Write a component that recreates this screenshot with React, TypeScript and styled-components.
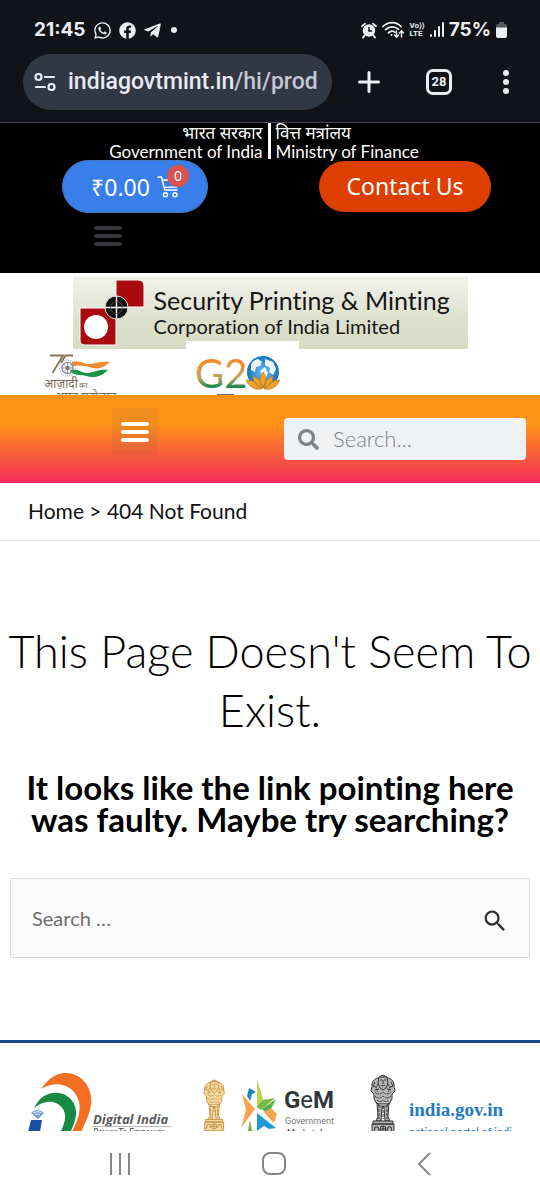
import React from "react";
import styled, { createGlobalStyle } from "styled-components";
import { FaFacebook, FaSearch, FaTelegramPlane, FaWhatsapp } from "react-icons/fa";
import { MdSearch } from "react-icons/md";

const sans = `Lato, "Noto Sans Devanagari", "Noto Sans", sans-serif`;

const GlobalStyle = createGlobalStyle`
  *, *::before, *::after { box-sizing: border-box; }
  body { margin: 0; background: #fff; color: #000; font-family: ${sans}; font-variant-ligatures: no-common-ligatures; }
  button { border: 0; padding: 0; background: none; font: inherit; color: inherit; cursor: pointer; }
  a { color: inherit; text-decoration: none; }
  svg { display: block; flex: none; }
  h1, h2, p { margin: 0; }
`;

/* ---------- phone chrome ---------- */

const Chrome = styled.div`
  background: #111318;
  color: #eceef2;
  border-bottom: 1px solid #45434b;
`;

const StatusBar = styled.div`
  display: flex;
  justify-content: space-between;
  align-items: center;
  height: 54px;
  padding: 6px 33px 0 34px;
  font: 700 19px/24px Inter, sans-serif;
`;

const StatusGroup = styled.div<{ $gap: number }>`
  display: flex;
  align-items: center;
  gap: ${(p) => p.$gap}px;
`;

const Volte = styled.span`
  display: grid;
  font: 700 8px/8px Roboto, sans-serif;
`;

const Toolbar = styled.div`
  display: flex;
  align-items: center;
  height: 68px;
  padding: 0 0 12px 23px;
`;

const AddressPill = styled.button`
  display: flex;
  flex: 1;
  align-items: center;
  gap: 12px;
  min-width: 0;
  height: 56px;
  padding: 0 11px;
  border-radius: 28px;
  background: #323744;
  color: #e7eaf4;
  font: 500 23px/32px Roboto, sans-serif;
  white-space: nowrap;
`;

const UrlPath = styled.span`
  color: #c3c7d3;
`;

const ToolButton = styled.button<{ $width: number }>`
  display: grid;
  place-items: center;
  width: ${(p) => p.$width}px;
  height: 48px;
`;

const TabCount = styled.span`
  display: grid;
  place-items: center;
  width: 26px;
  height: 26px;
  border: 3px solid currentColor;
  border-radius: 7px;
  font: 700 13px/16px Roboto, sans-serif;
`;

const SystemNav = styled.nav`
  display: flex;
  justify-content: space-around;
  align-items: center;
  height: 68px;
  padding: 0 44px 2px;
  background: #fff;
  color: #858585;
`;

/* ---------- site header ---------- */

const TopBar = styled.header`
  height: 150px;
  background: #000;
  color: #fff;
`;

const Ministry = styled.div`
  display: grid;
  grid-template-columns: minmax(0, 1fr) 3px minmax(0, 1fr);
  gap: 5px;
  height: 37px;
  padding-right: 2px;
  font-size: 17px;
  line-height: 19px;
  white-space: nowrap;
`;

const MinistryName = styled.p<{ $align: "left" | "right" }>`
  text-align: ${(p) => p.$align};
`;

const Hindi = styled.span`
  display: block;
`;

const Rule = styled.span`
  height: 36px;
  background: #fff;
`;

const Actions = styled.div`
  display: grid;
  grid-template-columns: minmax(0, 1fr) minmax(0, 1fr);
  justify-items: center;
  align-items: center;
  font-family: "Noto Sans", sans-serif;
  font-size: 23px;
`;

const CartButton = styled.button`
  display: flex;
  align-items: center;
  justify-content: center;
  gap: 7px;
  width: 146px;
  height: 53px;
  border: 1px solid #4b78b8;
  border-radius: 27px;
  background: #387fec;
`;

const CartIcon = styled.span`
  position: relative;
`;

const Badge = styled.span`
  position: absolute;
  top: -11px;
  right: -10px;
  width: 22px;
  height: 22px;
  border-radius: 50%;
  background: #d9534f;
  font-size: 14px;
  line-height: 22px;
  text-align: center;
`;

const ContactLink = styled.a`
  width: 172px;
  border-radius: 26px;
  background: #dd3f00;
  line-height: 51px;
  text-align: center;
`;

const TopMenu = styled.div`
  display: grid;
  justify-items: center;
  width: 40%;
  padding-top: 13px;
  color: #33363b;
`;

const BrandArea = styled.section`
  height: 122px;
  padding-top: 3px;
  overflow: hidden;
`;

const Banner = styled.a`
  display: flex;
  align-items: center;
  gap: 10px;
  width: 395px;
  max-width: 100%;
  height: 73px;
  margin: 0 auto;
  padding-left: 6px;
  background: linear-gradient(#f2f2ec, #dde0cd 60%, #d7dac3);
  color: #161616;
  white-space: nowrap;
`;

const BannerText = styled.span`
  display: grid;
  padding-bottom: 2px;
  font-size: 25px;
  line-height: 28px;
`;

const BannerSub = styled.span`
  font-size: 20px;
  line-height: 24px;
`;

const Partners = styled.div`
  display: flex;
  gap: 61px;
  padding-left: 43px;
`;

const G20Card = styled.div`
  width: 113px;
  margin-top: -8px;
  padding-left: 8px;
  background: #fff;
`;

const NavBand = styled.nav`
  display: grid;
  grid-template-columns: minmax(0, 1fr) minmax(0, 1fr);
  height: 88px;
  padding-top: 13px;
  background: linear-gradient(#ff9318 33%, #f22c5c);
`;

const MenuButton = styled.button`
  display: grid;
  place-items: center;
  justify-self: center;
  width: 46px;
  height: 47px;
  border-radius: 4px;
  background: rgba(80, 80, 80, 0.08);
  color: #fff;
`;

const NavSearch = styled.label`
  display: flex;
  align-items: center;
  gap: 14px;
  height: 42px;
  margin: 10px 14px 0;
  padding: 0 14px;
  border-radius: 4px;
  background: #eff1f3;
  color: #7e8287;
`;

const SearchInput = styled.input`
  flex: 1;
  min-width: 0;
  border: 0;
  padding: 0;
  background: none;
  outline: 0;
  color: inherit;
  font: 400 20px/28px ${sans};
  &::placeholder { color: inherit; opacity: 1; }
`;

const LightInput = styled(SearchInput)`
  font-size: 22px;
  font-weight: 300;
`;

/* ---------- content ---------- */

const Breadcrumb = styled.nav`
  height: 58px;
  padding-left: 28px;
  border-bottom: 1px solid #e4e4e4;
  color: #111;
  font-size: 21px;
  line-height: 56px;
`;

const Main = styled.main`
  padding: 81px 0 82px;
  text-align: center;
`;

const Title = styled.h1`
  font-size: 45px;
  font-weight: 300;
  line-height: 59px;
`;

const Subtitle = styled.h2`
  max-width: 510px;
  margin: 31px auto 43px;
  font-size: 33px;
  font-weight: 700;
  line-height: 32px;
`;

const SearchForm = styled.form`
  display: flex;
  align-items: center;
  height: 80px;
  margin: 0 10px;
  padding: 0 20px 0 21px;
  border: 1px solid #dcdcdc;
  border-radius: 2px;
  background: #fafafa;
  color: #707070;
`;

const SubmitButton = styled.button`
  padding-top: 6px;
  color: #303030;
`;

const Footer = styled.footer`
  display: flex;
  justify-content: space-between;
  align-items: flex-end;
  height: 91px;
  padding: 0 28px;
  border-top: 3px solid #164a8c;
`;

/* ---------- drawings ---------- */

const Bars = () => (
  <svg width="28" height="20" viewBox="0 0 28 20" fill="currentColor" aria-hidden="true">
    <rect width="28" height="4" rx="2" />
    <rect y="8" width="28" height="4" rx="2" />
    <rect y="16" width="28" height="4" rx="2" />
  </svg>
);

const AlarmIcon = () => (
  <svg width="16" height="17" viewBox="0 0 16 17">
    <circle cx="8" cy="8.5" r="6.2" fill="#eceef2" />
    <path d="M1 4.2 4 1.6M15 4.2 12 1.6M3.6 13.4 2 15.6M12.4 13.4 14 15.6" stroke="#eceef2" strokeWidth="1.8" strokeLinecap="round" />
    <path d="M8 5v4h3" stroke="#111318" strokeWidth="1.5" fill="none" />
  </svg>
);

const WifiIcon = () => (
  <svg width="23" height="18" viewBox="0 0 23 18" fill="none" stroke="#eceef2" strokeWidth="1.8" strokeLinecap="round">
    <path d="M1 5.5C6 .2 14.5 .2 19 5.5M3.6 8.7c3.6-3.8 9.4-3.8 12.8-.4M6.5 11.8c2-2 5-2 6.500-.6" />
    <circle cx="9.5" cy="14" r="1" fill="#eceef2" stroke="none" />
    <path d="M14.5 10v6m-2-2 2 2.200 2-2.200M19.5 16v-6m-2 2 2-2.200 2 2.200" strokeWidth="1.4" />
  </svg>
);

const SignalIcon = () => (
  <svg width="14" height="16" viewBox="0 0 14 16" fill="#eceef2">
    <rect y="12" width="2" height="3" rx="1" />
    <rect x="4" y="8" width="2" height="7" rx="1" />
    <rect x="8" y="4" width="2" height="11" rx="1" />
    <rect x="12" width="2" height="15" rx="1" />
  </svg>
);

const BatteryIcon = () => (
  <svg width="11" height="16" viewBox="0 0 11 16">
    <path d="M3 0h5v2h1.500Q11 2 11 4v3H0V4Q0 2 1.500 2H3z" fill="#55575c" />
    <path d="M0 5.500h11V14q0 2-2 2H2q-2 0-2-2z" fill="#eceef2" />
  </svg>
);

const TuneIcon = () => (
  <svg width="22" height="18" viewBox="0 0 22 18" fill="none" stroke="currentColor" strokeWidth="2.2" strokeLinecap="round">
    <circle cx="4.5" cy="4" r="3" />
    <path d="M11 4h9M2 14h9" />
    <circle cx="17.5" cy="14" r="3" />
  </svg>
);

const CartDrawing = () => (
  <svg width="22" height="22" viewBox="0 0 22 22" fill="none" stroke="#fff" strokeWidth="1.4" strokeLinecap="round" strokeLinejoin="round">
    <path d="M1 1h3.500l3.200 13H20M5.200 4H21l-1.500 7-12.500.4" />
    <circle cx="8.5" cy="18.8" r="2" />
    <circle cx="18" cy="18.8" r="2" />
  </svg>
);

const CorporationMark = () => (
  <svg width="65" height="66" viewBox="0 0 65 66">
    <path d="M37 0h22q6 0 6 6v21H37z" fill="#a80a0d" stroke="#fff" />
    <path d="M1 28h36v37H6q-5 0-5-5z" fill="#a80a0d" stroke="#fff" />
    <circle cx="17" cy="47" r="12" fill="#fff" />
    <circle cx="37.5" cy="27.5" r="11.5" fill="#111" stroke="#dfe2d3" />
    <path d="M26 27.500h23M37.500 16v23" stroke="#fff" strokeWidth="1.4" />
    <circle cx="37.5" cy="27.5" r="6" fill="none" stroke="#555" strokeWidth=".8" />
  </svg>
);

const AzadiLogo = () => (
  <svg width="82" height="46" viewBox="0 0 82 46">
    <path d="M7 6.500h13L9.500 24M30 6.500h-7.500L18 14" fill="none" stroke="#83745a" strokeWidth="1.8" />
    <path d="M29 13c8-3 12 3 19 2s10-3 19-2q-4 4-10 6c-8 2-13-3-19-2-4 1-6 0-9-1z" fill="#f5872c" />
    <path d="M32 17c7-2 10 3 17 2l-4 3-11-1z" fill="#fff" />
    <path d="M27 21c8-2 12 4 19 3s9-4 19-3q-4 4-9 6c-8 3-13-1-19-1-4 0-7-1-10-4z" fill="#159447" />
    <g fill="none" stroke="#7e8799">
      <circle cx="24.5" cy="19" r="5.6" strokeWidth="1.2" />
      <path d="M24.500 13.500v11M19 19h11M20.500 15l8 8M28.500 15l-8 8" strokeWidth=".8" />
      <circle cx="24.5" cy="19" r="8" strokeWidth=".8" strokeDasharray="1 1" />
    </g>
    <circle cx="24.5" cy="19" r="2" fill="#7c6672" />
    <g fill="#756c5c" fontFamily={`"Noto Sans Devanagari", "Noto Sans", sans-serif`}>
      <text x="1" y="39" fontSize="12">आज़ादी</text>
      <text x="36" y="39" fontSize="8">का</text>
      <text x="12" y="52" fontSize="12">अमृत महोत्सव</text>
    </g>
  </svg>
);

const G20Logo = () => (
  <svg width="90" height="54" viewBox="0 0 90 54">
    <defs>
      <linearGradient id="tricolor" x1="0" y1="0" x2="0" y2="1">
        <stop offset=".25" stopColor="#f58a2b" />
        <stop offset=".6" stopColor="#c0a45a" />
        <stop offset=".8" stopColor="#158653" />
      </linearGradient>
      <radialGradient id="globe">
        <stop offset="0" stopColor="#6bc1ee" />
        <stop offset="1" stopColor="#1474bd" />
      </radialGradient>
    </defs>
    <text x="1" y="47" fontSize="40" fontFamily="Lato, sans-serif" fill="url(#tricolor)">G2</text>
    <circle cx="69" cy="31" r="16" fill="url(#globe)" />
    <path d="M57 24q2-5 7-6l4 3-2 4-4 1-1 5-4-2zM71 18l8 3 3 7-3 6-4-3 1-4-5-3zM66 30l5-4 3 6-3 7z" fill="#edf7fa" />
    <path d="M69 31q6 7 0 16-6-9 0-16zM59 35q8 3 10 12-10-2-10-12zM79 35q-8 3-10 12 10-2 10-12zM52 39q10 0 16 9-11 2-16-9zM86 39q-10 0-16 9 11 2 16-9z" fill="#eda22b" stroke="#ba7926" strokeWidth=".7" />
    <path d="M23 53.500h17" stroke="#756c5c" />
  </svg>
);

const Lions = ({ ink, paper }: { ink: string; paper: string }) => (
  <g fill={paper} stroke={ink} strokeWidth="1">
    <path d="M7 4Q1 7 2 13l-1 4 3 3v5l3 5h12l3-5v-5l3-3-1-4q1-6-5-9z" />
    <path d="M9 3l4-2 4 2 1 6-2 5-3 2-3-2-2-5z" />
    <path d="M10 3h6M10 6h2m2 0h2M13 6v4m-2 1q2 2 4 0M5 8l-2 4 3 1M21 8l2 4-3 1M5 16l4-1m12 1-4-1" fill="none" />
    <path d="M5 18q4 4 8 0 4 4 8 0M5 22q4 4 8 0 4 4 8 0M7 26q3 3 6 0 3 3 6 0M8 10l-2 4 2 4M18 10l2 4-2 4" fill="none" strokeDasharray="2 .7" />
    <path d="M7 29l1 14-2 4h5l1-14h2l1 14h5l-2-4 1-14-3 3h-6z" />
    <path d="M9 31v14M17 31v14M13 32v13" strokeDasharray="3 1" />
    <path d="M3 47h20v3H3zM2 50h22v10H2z" />
    <circle cx="13" cy="55" r="3" />
    <path d="M4 58l1-5h3l1 4M22 58l-1-5h-3l-1 4M13 52v6M10 55h6" fill="none" />
  </g>
);

const DigitalIndia = () => (
  <svg width="144" height="60" viewBox="0 0 144 60" role="img" aria-label="Digital India">
    <path d="M13 18C21 6 30 1 40 2c17 2 25 18 23 32-2 12-7 19-10 28H43c7-12 10-22 8-31C47 15 30 8 13 18z" fill="#f36f21" />
    <path d="M6 37C12 25 21 21 31 22c12 2 18 12 17 22-1 8-4 13-6 18H32c5-10 7-17 3-24-6-9-18-10-29-1z" fill="#198a43" />
    <path d="M3 42q6-6 13 0l-6 6z" fill="#6f9bd5" />
    <path d="M5 42q5-3 9 0M7 44q3-2 5 0" stroke="#fff" strokeWidth=".8" fill="none" />
    <path d="M3 49h11l-2 12H0z" fill="#1c50a5" />
    <text x="65" y="53" fontSize="13" fontWeight="700" fontStyle="italic" fontFamily="Open Sans, sans-serif" fill="#58595b">Digital India</text>
    <path d="M64 55.500h79" stroke="#aaa" strokeWidth=".8" />
    <text x="65" y="64" fontSize="9" fontStyle="italic" fontWeight="600" fontFamily="Lato, sans-serif" fill="#58595b">Power To Empower</text>
  </svg>
);

const Gem = () => (
  <svg width="136" height="60" viewBox="0 0 136 60" role="img" aria-label="GeM Government Marketplace">
    <g transform="translate(0 8) scale(.86)"><Lions ink="#c18a3b" paper="#f4d9a0" /></g>
    <path d="M39 23l13 15-14 19 5-18z" fill="#f5a34d" />
    <path d="M46 17l7 4-4 2-2 7-3-5z" fill="#1684c8" />
    <path d="M54 9l6 20 12-2-14 12-4-3z" fill="#78b943" />
    <path d="M54 9v26l6-6z" fill="#bbd64a" />
    <path d="M59 38l14-10-5 10-6 3z" fill="#4fb350" />
    <path d="M61 41l7-4 6 6-3 9-5-5z" fill="#f3a44f" />
    <path d="M54 42l19 15-7 1-5-3-7 5z" fill="#1c9bd8" />
    <path d="M47 49l2 11h-4z" fill="#6dae45" />
    <text x="81" y="37" fontSize="24" fontWeight="700" fontFamily="Roboto, sans-serif" fill="#33373b">G<tspan fontWeight="400">e</tspan>M</text>
    <text x="82" y="53" fontSize="9" fontFamily="Roboto, sans-serif" fill="#777">Government</text>
    <text x="84" y="65" fontSize="9" fontFamily="Roboto, sans-serif" fill="#333">Marketplace</text>
  </svg>
);

const IndiaPortal = () => (
  <svg width="142" height="60" viewBox="0 0 142 60" role="img" aria-label="india.gov.in national portal of india">
    <g transform="translate(0 3)"><Lions ink="#333" paper="#b5b5b5" /></g>
    <text x="39" y="45" fontSize="19" fontWeight="700" fontFamily="Liberation Serif, serif" fill="#2279c7">india.gov.in</text>
    <text x="39" y="65" fontSize="11" fontFamily="Lato, sans-serif" fill="#2279c7">national portal of india</text>
  </svg>
);

export default function App() {
  return (
    <>
      <GlobalStyle />
      <Chrome>
        <StatusBar>
          <StatusGroup $gap={7}>
            <span>21:45</span>
            <FaWhatsapp size={19} />
            <FaFacebook size={17} />
            <FaTelegramPlane size={19} />
            <svg width="14" height="6" viewBox="0 0 14 6"><circle cx="5" cy="3" r="3" fill="#eceef2" /></svg>
          </StatusGroup>
          <StatusGroup $gap={5}>
            <AlarmIcon />
            <WifiIcon />
            <Volte><span>Vo))</span><span>LTE</span></Volte>
            <SignalIcon />
            <span>75%</span>
            <BatteryIcon />
          </StatusGroup>
        </StatusBar>
        <Toolbar>
          <AddressPill type="button">
            <TuneIcon />
            <span>indiagovtmint.in<UrlPath>/hi/prod</UrlPath></span>
          </AddressPill>
          <ToolButton type="button" $width={74} aria-label="New tab">
            <svg width="22" height="22" viewBox="0 0 22 22" stroke="currentColor" strokeWidth="3" strokeLinecap="round"><path d="M11 1.500v19M1.500 11h19" /></svg>
          </ToolButton>
          <ToolButton type="button" $width={66} aria-label="Open tabs"><TabCount>28</TabCount></ToolButton>
          <ToolButton type="button" $width={68} aria-label="More options">
            <svg width="6" height="24" viewBox="0 0 6 24" fill="currentColor"><circle cx="3" cy="3" r="3" /><circle cx="3" cy="12" r="3" /><circle cx="3" cy="21" r="3" /></svg>
          </ToolButton>
        </Toolbar>
      </Chrome>

      <TopBar>
        <Ministry>
          <MinistryName $align="right"><Hindi lang="hi">भारत सरकार</Hindi>Government of India</MinistryName>
          <Rule />
          <MinistryName $align="left"><Hindi lang="hi">वित्त मत्रांलय</Hindi>Ministry of Finance</MinistryName>
        </Ministry>
        <Actions>
          <CartButton type="button">
            <span>₹0.00</span>
            <CartIcon><CartDrawing /><Badge>0</Badge></CartIcon>
          </CartButton>
          <ContactLink href="#contact">Contact Us</ContactLink>
        </Actions>
        <TopMenu><button type="button" aria-label="Top menu"><Bars /></button></TopMenu>
      </TopBar>

      <BrandArea>
        <Banner href="#home">
          <CorporationMark />
          <BannerText>
            Security Printing &amp; Minting
            <BannerSub>Corporation of India Limited</BannerSub>
          </BannerText>
        </Banner>
        <Partners>
          <AzadiLogo />
          <G20Card><G20Logo /></G20Card>
        </Partners>
      </BrandArea>

      <NavBand>
        <MenuButton type="button" aria-label="Main menu"><Bars /></MenuButton>
        <NavSearch>
          <FaSearch size={21} aria-hidden="true" />
          <LightInput type="search" placeholder="Search..." aria-label="Search site" />
        </NavSearch>
      </NavBand>

      <Breadcrumb aria-label="Breadcrumb"><a href="#home">Home</a> &gt; 404 Not Found</Breadcrumb>

      <Main>
        <Title>This Page Doesn't Seem To Exist.</Title>
        <Subtitle>It looks like the link pointing here was faulty. Maybe try searching?</Subtitle>
        <SearchForm role="search">
          <SearchInput type="search" placeholder="Search …" aria-label="Search" />
          <SubmitButton type="button" aria-label="Submit search"><MdSearch size={28} /></SubmitButton>
        </SearchForm>
      </Main>

      <Footer>
        <DigitalIndia />
        <Gem />
        <IndiaPortal />
      </Footer>

      <SystemNav aria-label="System navigation">
        <button type="button" aria-label="Recent apps">
          <svg width="22" height="22" viewBox="0 0 22 22" stroke="currentColor" strokeWidth="2"><path d="M2 0v22M11 0v22M20 0v22" /></svg>
        </button>
        <button type="button" aria-label="Home screen">
          <svg width="24" height="24" viewBox="0 0 24 24" fill="none" stroke="currentColor" strokeWidth="2"><rect x="1" y="1" width="22" height="21" rx="7" /></svg>
        </button>
        <button type="button" aria-label="Back">
          <svg width="14" height="24" viewBox="0 0 14 24" fill="none" stroke="currentColor" strokeWidth="2"><path d="M13 1 2 12l11 11" /></svg>
        </button>
      </SystemNav>
    </>
  );
}
